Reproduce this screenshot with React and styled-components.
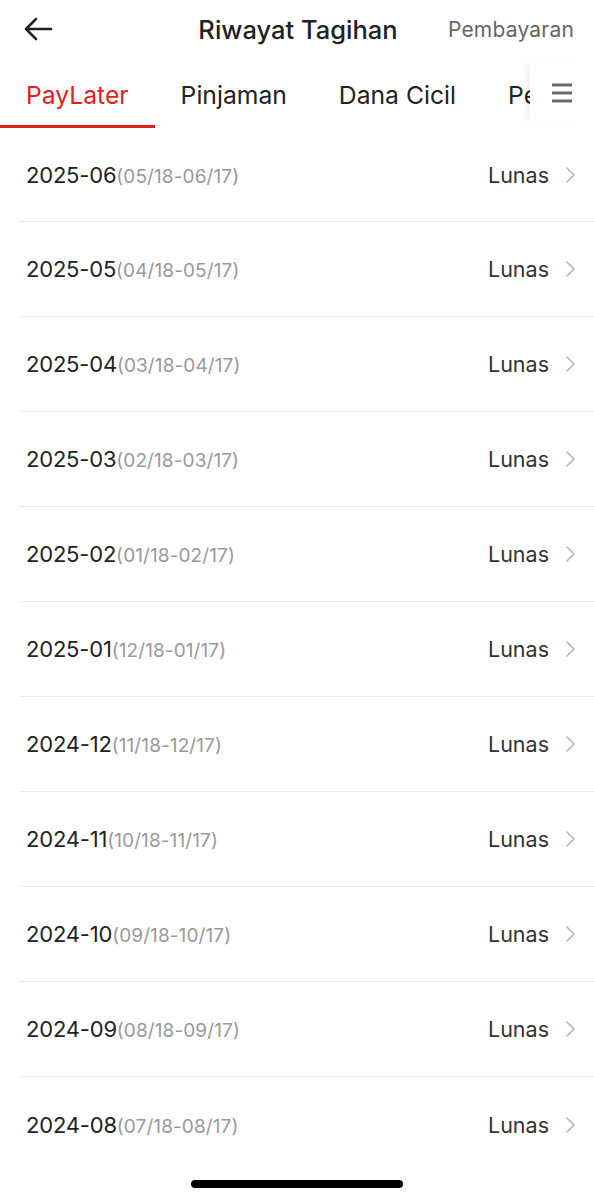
import React from "react";
import styled, { createGlobalStyle } from "styled-components";

const Global = createGlobalStyle`
  html, body { margin: 0; padding: 0; background: #fff; }
  body { font-family: Inter, "Noto Sans", sans-serif; -webkit-font-smoothing: antialiased; }
  * { box-sizing: border-box; }
`;

const Page = styled.div`
  width: 594px;
  height: 1200px;
  background: #fff;
  display: flex;
  flex-direction: column;
  position: relative;
  overflow: hidden;
`;

const Header = styled.div`
  height: 60px;
  display: grid;
  grid-template-columns: 1fr auto 1fr;
  align-items: center;
  padding: 0 20px 2px 22px;
`;

const BackBtn = styled.div`
  display: flex;
  align-items: center;
  color: #222;
`;

const Title = styled.div`
  font-size: 25.5px;
  font-weight: 500;
  color: #222;
`;

const HeaderAction = styled.div`
  justify-self: end;
  font-size: 21px;
  color: #666;
  letter-spacing: 0.2px;
`;

const TabBar = styled.div`
  height: 68px;
  display: flex;
  align-items: stretch;
  position: relative;
`;

const TabScroll = styled.div`
  flex: 1;
  display: flex;
  overflow: hidden;
`;

const Tab = styled.div`
  flex: none;
  padding: 2px 26px 0;
  display: flex;
  align-items: center;
  font-size: 24.7px;
  font-weight: 400;
  color: ${(p) => (p.$active ? "#e3211c" : "#222")};
  position: relative;
  &::after {
    content: "";
    display: ${(p) => (p.$active ? "block" : "none")};
    position: absolute;
    left: 0;
    right: 0;
    bottom: 0;
    height: 3px;
    background: #e3211c;
  }
`;

const MenuBtn = styled.div`
  flex: none;
  width: 64px;
  display: flex;
  align-items: center;
  justify-content: center;
  background: #fff;
  box-shadow: -6px 0 8px -4px rgba(0, 0, 0, 0.08);
  margin-bottom: 4px;
  padding: 2px 0 0;
`;

const List = styled.div`
  display: flex;
  flex-direction: column;
`;

const Row = styled.div`
  height: 95px;
  display: flex;
  align-items: center;
  margin-left: 19px;
  padding: 0 18px 0 7px;
  border-bottom: 1px solid #ebebeb;
  &:first-child { height: 94px; }
  &:last-child { border-bottom: none; }
`;

const Period = styled.div`
  flex: 1;
  display: flex;
  align-items: baseline;
`;

const Month = styled.span`
  font-size: 22px;
  color: #222;
  letter-spacing: -0.2px;
`;

const Range = styled.span`
  font-size: 19px;
  color: #999;
  letter-spacing: 0.1px;
`;

const Status = styled.span`
  font-size: 21.5px;
  color: #333;
  margin-right: 16px;
`;

const Chevron = styled.svg`
  width: 11px;
  height: 18px;
`;

const HomeIndicator = styled.div`
  position: absolute;
  left: 50%;
  bottom: 12px;
  width: 212px;
  height: 8px;
  margin-left: -106px;
  border-radius: 4px;
  background: #000;
`;

const rows = [
  ["2025-06", "05/18-06/17"],
  ["2025-05", "04/18-05/17"],
  ["2025-04", "03/18-04/17"],
  ["2025-03", "02/18-03/17"],
  ["2025-02", "01/18-02/17"],
  ["2025-01", "12/18-01/17"],
  ["2024-12", "11/18-12/17"],
  ["2024-11", "10/18-11/17"],
  ["2024-10", "09/18-10/17"],
  ["2024-09", "08/18-09/17"],
  ["2024-08", "07/18-08/17"],
];

export default function App() {
  return (
    <Page>
      <Global />
      <Header>
        <BackBtn>
          <svg width="32" height="28" viewBox="0 0 32 28" fill="none">
            <path d="M29 14H4M14 4L4 14l10 10" stroke="#222" strokeWidth="2.6" strokeLinecap="round" strokeLinejoin="round" />
          </svg>
        </BackBtn>
        <Title>Riwayat Tagihan</Title>
        <HeaderAction>Pembayaran</HeaderAction>
      </Header>
      <TabBar>
        <TabScroll>
          <Tab $active>PayLater</Tab>
          <Tab>Pinjaman</Tab>
          <Tab>Dana Cicil</Tab>
          <Tab>Pembayaran</Tab>
        </TabScroll>
        <MenuBtn>
          <svg width="22" height="22" viewBox="0 0 22 22">
            <path d="M1 3h20M1 11h20M1 19h20" stroke="#6a6a6a" strokeWidth="2.8" />
          </svg>
        </MenuBtn>
      </TabBar>
      <List>
        {rows.map(([m, r]) => (
          <Row key={m}>
            <Period>
              <Month>{m}</Month>
              <Range>({r})</Range>
            </Period>
            <Status>Lunas</Status>
            <Chevron viewBox="0 0 11 18" fill="none">
              <path d="M2 2l7 7-7 7" stroke="#b5b5b5" strokeWidth="1.6" strokeLinecap="round" strokeLinejoin="round" />
            </Chevron>
          </Row>
        ))}
      </List>
      <HomeIndicator />
    </Page>
  );
}
